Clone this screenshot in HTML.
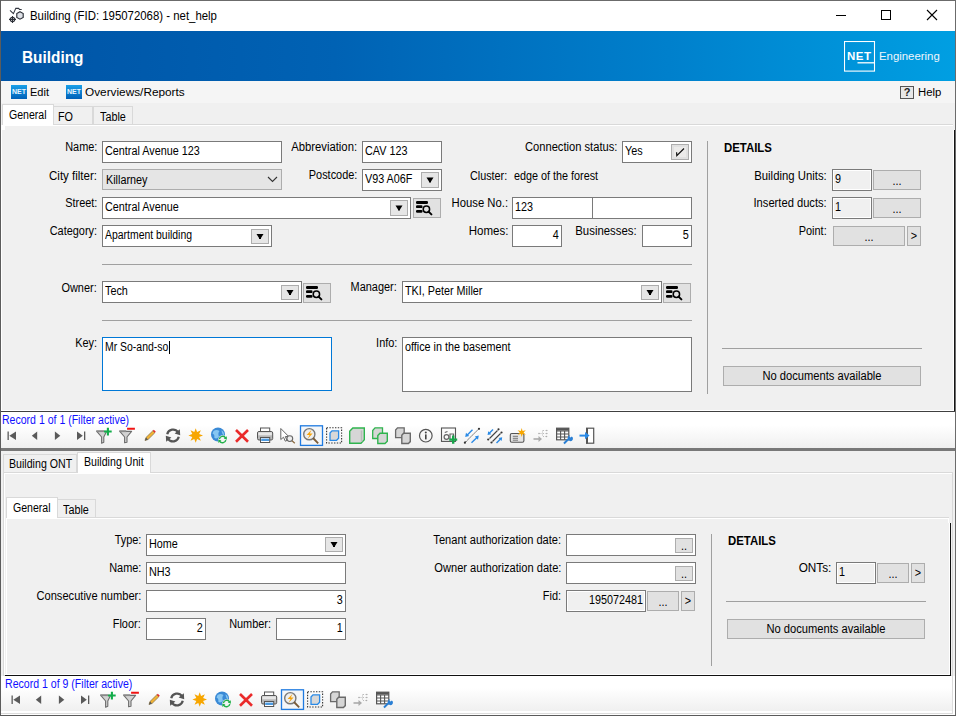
<!DOCTYPE html>
<html><head><meta charset="utf-8"><style>
html,body{margin:0;padding:0;}
body{width:956px;height:716px;overflow:hidden;position:relative;background:#f0f0f0;font-family:"Liberation Sans", sans-serif;}
.a{position:absolute;}
.t{position:absolute;white-space:nowrap;color:#000;}
</style></head><body>
<div class="a" style="left:0px;top:0px;width:956px;height:31px;background:#fff;"></div>
<svg class="a" style="left:0px;top:0px" width="30" height="30"><path d="M10,10.3 L13.4,13.6 L15.8,8.4 H18.6 L19.5,9.4 H21.7" fill="none" stroke="#333740" stroke-width="1.05"/><path d="M20,11.7 L23.2,13.5 V17.4 L20,19.2 L16.8,17.4 V13.5 Z" fill="#dfe2e8" stroke="#2d3038" stroke-width="1.15"/><circle cx="12.5" cy="19.4" r="2.2" fill="#f4f5f7" stroke="#2d3038" stroke-width="1.1"/><path d="M12.5,15.9 V22.9 M9,19.4 H16" stroke="#2d3038" stroke-width="1.1"/></svg>
<div class="t" style="left:30px;transform-origin:0 0;top:9px;font-size:12px;line-height:14px;transform:scaleX(0.95);">Building (FID: 195072068) - net_help</div>
<div class="a" style="left:836px;top:15px;width:10px;height:1px;background:#000;"></div>
<div class="a" style="left:881px;top:10px;width:10px;height:10px;border:1px solid #000;box-sizing:border-box;"></div>
<svg class="a" style="left:926px;top:9px" width="12" height="12"><path d="M1,1 L11,11 M11,1 L1,11" stroke="#000" stroke-width="1.1"/></svg>
<div class="a" style="left:1px;top:31px;width:954px;height:50px;background:linear-gradient(90deg,#0054a6 0%,#0062b4 35%,#0080cc 70%,#009fe2 100%);"></div>
<div class="t" style="left:22px;transform-origin:0 0;top:49px;font-size:16px;line-height:18px;transform:scaleX(0.96);font-weight:bold;color:#fff;">Building</div>
<svg class="a" style="left:844px;top:41px" width="32" height="31"><rect x="0.5" y="0.5" width="30" height="29.6" fill="none" stroke="#fff" stroke-width="1.1"/><path d="M13.5,21.8 H31" stroke="#fff" stroke-width="1.3"/></svg>
<div class="t" style="left:847px;transform-origin:0 0;top:50px;font-size:11.5px;line-height:13.5px;font-weight:bold;color:#fff;letter-spacing:0.5px;">NET</div>
<div class="t" style="left:879px;transform-origin:0 0;top:50px;font-size:11.5px;line-height:13.5px;transform:scaleX(0.99);color:#eef6fc;">Engineering</div>
<div class="a" style="left:1px;top:81px;width:954px;height:22px;background:#f5f5f5;"></div>
<div class="a" style="left:11px;top:85px;width:16px;height:14px;background:linear-gradient(180deg,#1aa0e8,#0060b8);"></div>
<div class="t" style="left:11px;top:88px;width:16px;text-align:center;font-size:7px;line-height:8px;font-weight:bold;color:#e8f4ff;">NET</div>
<div class="t" style="left:30px;transform-origin:0 0;top:85px;font-size:11.7px;line-height:13.7px;transform:scaleX(0.94);">Edit</div>
<div class="a" style="left:66px;top:85px;width:16px;height:14px;background:linear-gradient(180deg,#1aa0e8,#0060b8);"></div>
<div class="t" style="left:66px;top:88px;width:16px;text-align:center;font-size:7px;line-height:8px;font-weight:bold;color:#e8f4ff;">NET</div>
<div class="t" style="left:85px;transform-origin:0 0;top:85px;font-size:11.7px;line-height:13.7px;transform:scaleX(1.01);">Overviews/Reports</div>
<div class="a" style="left:900px;top:86px;width:14px;height:13px;box-sizing:border-box;border:1px solid #555;background:#e8e8e8;"></div>
<div class="t" style="left:900px;top:85px;width:14px;text-align:center;font-size:11px;line-height:14px;font-weight:bold;color:#222;">?</div>
<div class="t" style="left:918px;transform-origin:0 0;top:85px;font-size:11.7px;line-height:13.7px;transform:scaleX(0.97);">Help</div>
<div class="a" style="left:1px;top:103px;width:954px;height:22px;background:#f0f0f0;"></div>
<div class="a" style="left:53px;top:124px;width:900px;height:1px;background:#d9d9d9;"></div>
<div class="a" style="left:53px;top:106px;width:40px;height:19px;background:#f0f0f0;border:1px solid #d9d9d9;box-sizing:border-box;"></div>
<div class="a" style="left:93px;top:106px;width:40px;height:19px;background:#f0f0f0;border:1px solid #d9d9d9;box-sizing:border-box;"></div>
<div class="a" style="left:2px;top:104px;width:52px;height:21px;background:#fff;border:1px solid #d9d9d9;box-sizing:border-box;border-bottom:none;"></div>
<div class="t" style="left:9px;transform-origin:0 0;top:108px;font-size:12px;line-height:14px;transform:scaleX(0.88);">General</div>
<div class="t" style="left:58px;transform-origin:0 0;top:110px;font-size:12px;line-height:14px;transform:scaleX(0.9);">FO</div>
<div class="t" style="left:100px;transform-origin:0 0;top:110px;font-size:12px;line-height:14px;transform:scaleX(0.9);">Table</div>
<div class="a" style="left:1px;top:125px;width:954px;height:287px;background:#f0f0f0;"></div>
<div class="a" style="left:1px;top:125px;width:4px;height:5px;background:#fff;"></div>
<div class="a" style="left:5px;top:125px;width:948px;height:1px;background:#fff;"></div>
<div class="a" style="left:1px;top:130px;width:1px;height:282px;background:#fff;"></div>
<div class="a" style="left:953px;top:130px;width:1px;height:281px;background:#fff;"></div>
<div class="a" style="left:954px;top:130px;width:1px;height:282px;background:#141414;"></div>
<div class="a" style="left:1px;top:410px;width:953px;height:1px;background:#fff;"></div>
<div class="a" style="left:1px;top:411px;width:954px;height:1px;background:#404040;"></div>
<div class="a" style="left:1px;top:412px;width:954px;height:1px;background:#9a9a9a;"></div>
<div class="t" style="right:859px;transform-origin:100% 0;top:140px;font-size:12px;line-height:14px;transform:scaleX(0.91);">Name:</div>
<div class="a" style="left:102px;top:141px;width:180px;height:22px;background:#fff;border:1px solid #7a7a7a;box-sizing:border-box;"></div>
<div class="t" style="left:105px;transform-origin:0 0;top:144px;font-size:12px;line-height:14px;transform:scaleX(0.9);">Central Avenue 123</div>
<div class="t" style="right:599px;transform-origin:100% 0;top:140px;font-size:12px;line-height:14px;transform:scaleX(0.94);">Abbreviation:</div>
<div class="a" style="left:362px;top:141px;width:80px;height:22px;background:#fff;border:1px solid #7a7a7a;box-sizing:border-box;"></div>
<div class="t" style="left:365px;transform-origin:0 0;top:144px;font-size:12px;line-height:14px;transform:scaleX(0.9);">CAV 123</div>
<div class="t" style="right:339px;transform-origin:100% 0;top:140px;font-size:12px;line-height:14px;transform:scaleX(0.93);">Connection status:</div>
<div class="a" style="left:622px;top:141px;width:70px;height:22px;background:#fff;border:1px solid #7a7a7a;box-sizing:border-box;"></div>
<div class="t" style="left:625px;transform-origin:0 0;top:144px;font-size:12px;line-height:14px;transform:scaleX(0.9);">Yes</div>
<div class="a" style="left:671px;top:144px;width:18px;height:16px;background:#e1e1e1;border:1px solid #adadad;box-sizing:border-box;"></div>
<div class="a" style="left:674px;top:147px;width:12px;height:10px;background:#ecebea;"></div>
<svg class="a" style="left:671px;top:144px" width="18" height="16"><path d="M5.6,8.2 L5.8,11.6 L13,4.5" fill="none" stroke="#111" stroke-width="1.2"/></svg>
<div class="t" style="right:859px;transform-origin:100% 0;top:169px;font-size:12px;line-height:14px;transform:scaleX(0.96);">City filter:</div>
<div class="a" style="left:102px;top:169px;width:180px;height:21px;background:#e5e5e5;border:1px solid #adadad;box-sizing:border-box;"></div>
<div class="t" style="left:106px;transform-origin:0 0;top:173px;font-size:12px;line-height:14px;transform:scaleX(0.9);">Killarney</div>
<svg class="a" style="left:267px;top:174px" width="12" height="10"><path d="M1,3 L5.5,7.5 L10,3" fill="none" stroke="#333" stroke-width="1.1"/></svg>
<div class="t" style="right:599px;transform-origin:100% 0;top:168px;font-size:12px;line-height:14px;transform:scaleX(0.91);">Postcode:</div>
<div class="a" style="left:362px;top:169px;width:80px;height:22px;background:#fff;border:1px solid #7a7a7a;box-sizing:border-box;"></div>
<div class="t" style="left:365px;transform-origin:0 0;top:172px;font-size:12px;line-height:14px;transform:scaleX(0.9);">V93 A06F</div>
<div class="a" style="left:421px;top:172px;width:18px;height:16px;background:#e6e6e6;border:1px solid #adadad;box-sizing:border-box;"></div>
<svg class="a" style="left:421px;top:172px" width="18" height="16"><path d="M5.5,5.5 h7 l-2.5,4 v1 h-2 v-1 z" fill="#000"/></svg>
<div class="t" style="left:470px;transform-origin:0 0;top:169px;font-size:12px;line-height:14px;transform:scaleX(0.9);">Cluster:</div>
<div class="t" style="left:514px;transform-origin:0 0;top:169px;font-size:12px;line-height:14px;transform:scaleX(0.9);">edge of the forest</div>
<div class="t" style="right:859px;transform-origin:100% 0;top:196px;font-size:12px;line-height:14px;transform:scaleX(0.91);">Street:</div>
<div class="a" style="left:102px;top:197px;width:309px;height:22px;background:#fff;border:1px solid #7a7a7a;box-sizing:border-box;"></div>
<div class="t" style="left:105px;transform-origin:0 0;top:200px;font-size:12px;line-height:14px;transform:scaleX(0.9);">Central Avenue</div>
<div class="a" style="left:390px;top:200px;width:18px;height:16px;background:#e6e6e6;border:1px solid #adadad;box-sizing:border-box;"></div>
<svg class="a" style="left:390px;top:200px" width="18" height="16"><path d="M5.5,5.5 h7 l-2.5,4 v1 h-2 v-1 z" fill="#000"/></svg>
<div class="a" style="left:413px;top:198px;width:28px;height:20px;background:#e1e1e1;border:1px solid #adadad;box-sizing:border-box;"></div>
<svg class="a" style="left:413px;top:198px" width="28" height="20"><rect x="3" y="3" width="12" height="2.9" rx="1.2" fill="#000"/><rect x="3" y="7.2" width="6.5" height="2.9" rx="1.2" fill="#000"/><rect x="3" y="11.9" width="6.5" height="2.9" rx="1.2" fill="#000"/><circle cx="13.4" cy="11.2" r="3.2" fill="none" stroke="#000" stroke-width="1.5"/><path d="M15.6,13.6 L18.4,16.4" stroke="#000" stroke-width="2" stroke-linecap="round"/></svg>
<div class="t" style="right:448px;transform-origin:100% 0;top:196px;font-size:12px;line-height:14px;transform:scaleX(0.94);">House No.:</div>
<div class="a" style="left:512px;top:197px;width:81px;height:22px;background:#fff;border:1px solid #7a7a7a;box-sizing:border-box;"></div>
<div class="t" style="left:515px;transform-origin:0 0;top:200px;font-size:12px;line-height:14px;transform:scaleX(0.9);">123</div>
<div class="a" style="left:592px;top:197px;width:100px;height:22px;background:#fff;border:1px solid #7a7a7a;box-sizing:border-box;"></div>
<div class="t" style="right:859px;transform-origin:100% 0;top:224px;font-size:12px;line-height:14px;transform:scaleX(0.91);">Category:</div>
<div class="a" style="left:102px;top:225px;width:170px;height:22px;background:#fff;border:1px solid #7a7a7a;box-sizing:border-box;"></div>
<div class="t" style="left:105px;transform-origin:0 0;top:228px;font-size:12px;line-height:14px;transform:scaleX(0.87);">Apartment building</div>
<div class="a" style="left:251px;top:229px;width:18px;height:15px;background:#e6e6e6;border:1px solid #adadad;box-sizing:border-box;"></div>
<svg class="a" style="left:251px;top:229px" width="18" height="15"><path d="M5.5,5.0 h7 l-2.5,4 v1 h-2 v-1 z" fill="#000"/></svg>
<div class="t" style="right:448px;transform-origin:100% 0;top:224px;font-size:12px;line-height:14px;transform:scaleX(0.96);">Homes:</div>
<div class="a" style="left:512px;top:225px;width:50px;height:22px;background:#fff;border:1px solid #7a7a7a;box-sizing:border-box;"></div>
<div class="t" style="right:397px;transform-origin:100% 0;top:228px;font-size:12px;line-height:14px;transform:scaleX(0.9);">4</div>
<div class="t" style="right:319px;transform-origin:100% 0;top:224px;font-size:12px;line-height:14px;transform:scaleX(0.95);">Businesses:</div>
<div class="a" style="left:642px;top:225px;width:50px;height:22px;background:#fff;border:1px solid #7a7a7a;box-sizing:border-box;"></div>
<div class="t" style="right:267px;transform-origin:100% 0;top:228px;font-size:12px;line-height:14px;transform:scaleX(0.9);">5</div>
<div class="a" style="left:102px;top:264px;width:590px;height:1px;background:#a0a0a0;"></div>
<div class="t" style="right:859px;transform-origin:100% 0;top:281px;font-size:12px;line-height:14px;transform:scaleX(0.91);">Owner:</div>
<div class="a" style="left:102px;top:281px;width:200px;height:22px;background:#fff;border:1px solid #7a7a7a;box-sizing:border-box;"></div>
<div class="t" style="left:105px;transform-origin:0 0;top:284px;font-size:12px;line-height:14px;transform:scaleX(0.9);">Tech</div>
<div class="a" style="left:281px;top:285px;width:18px;height:15px;background:#e6e6e6;border:1px solid #adadad;box-sizing:border-box;"></div>
<svg class="a" style="left:281px;top:285px" width="18" height="15"><path d="M5.5,5.0 h7 l-2.5,4 v1 h-2 v-1 z" fill="#000"/></svg>
<div class="a" style="left:303px;top:283px;width:28px;height:20px;background:#e1e1e1;border:1px solid #adadad;box-sizing:border-box;"></div>
<svg class="a" style="left:303px;top:283px" width="28" height="20"><rect x="3" y="3" width="12" height="2.9" rx="1.2" fill="#000"/><rect x="3" y="7.2" width="6.5" height="2.9" rx="1.2" fill="#000"/><rect x="3" y="11.9" width="6.5" height="2.9" rx="1.2" fill="#000"/><circle cx="13.4" cy="11.2" r="3.2" fill="none" stroke="#000" stroke-width="1.5"/><path d="M15.6,13.6 L18.4,16.4" stroke="#000" stroke-width="2" stroke-linecap="round"/></svg>
<div class="t" style="right:559px;transform-origin:100% 0;top:280px;font-size:12px;line-height:14px;transform:scaleX(0.91);">Manager:</div>
<div class="a" style="left:402px;top:281px;width:260px;height:22px;background:#fff;border:1px solid #7a7a7a;box-sizing:border-box;"></div>
<div class="t" style="left:405px;transform-origin:0 0;top:284px;font-size:12px;line-height:14px;transform:scaleX(0.9);">TKI, Peter Miller</div>
<div class="a" style="left:641px;top:285px;width:18px;height:15px;background:#e6e6e6;border:1px solid #adadad;box-sizing:border-box;"></div>
<svg class="a" style="left:641px;top:285px" width="18" height="15"><path d="M5.5,5.0 h7 l-2.5,4 v1 h-2 v-1 z" fill="#000"/></svg>
<div class="a" style="left:663px;top:283px;width:28px;height:20px;background:#e1e1e1;border:1px solid #adadad;box-sizing:border-box;"></div>
<svg class="a" style="left:663px;top:283px" width="28" height="20"><rect x="3" y="3" width="12" height="2.9" rx="1.2" fill="#000"/><rect x="3" y="7.2" width="6.5" height="2.9" rx="1.2" fill="#000"/><rect x="3" y="11.9" width="6.5" height="2.9" rx="1.2" fill="#000"/><circle cx="13.4" cy="11.2" r="3.2" fill="none" stroke="#000" stroke-width="1.5"/><path d="M15.6,13.6 L18.4,16.4" stroke="#000" stroke-width="2" stroke-linecap="round"/></svg>
<div class="a" style="left:102px;top:320px;width:590px;height:1px;background:#a0a0a0;"></div>
<div class="t" style="right:859px;transform-origin:100% 0;top:336px;font-size:12px;line-height:14px;transform:scaleX(0.91);">Key:</div>
<div class="a" style="left:102px;top:337px;width:230px;height:54px;background:#fff;border:1px solid #0078d7;box-sizing:border-box;"></div>
<div class="t" style="left:105px;transform-origin:0 0;top:340px;font-size:12px;line-height:14px;transform:scaleX(0.87);">Mr So-and-so</div>
<div class="a" style="left:169px;top:341px;width:1px;height:13px;background:#000;"></div>
<div class="t" style="right:559px;transform-origin:100% 0;top:336px;font-size:12px;line-height:14px;transform:scaleX(0.91);">Info:</div>
<div class="a" style="left:402px;top:337px;width:290px;height:55px;background:#fff;border:1px solid #7a7a7a;box-sizing:border-box;"></div>
<div class="t" style="left:405px;transform-origin:0 0;top:340px;font-size:12px;line-height:14px;transform:scaleX(0.9);">office in the basement</div>
<div class="a" style="left:707px;top:141px;width:1px;height:253px;background:#a0a0a0;"></div>
<div class="t" style="left:724px;transform-origin:0 0;top:141px;font-size:12px;line-height:14px;transform:scaleX(0.95);font-weight:bold;">DETAILS</div>
<div class="t" style="right:129px;transform-origin:100% 0;top:169px;font-size:12px;line-height:14px;transform:scaleX(0.945);">Building Units:</div>
<div class="a" style="left:832px;top:169px;width:40px;height:22px;background:#fff;border:1px solid #7a7a7a;box-sizing:border-box;"></div>
<div class="a" style="left:833px;top:170px;width:38px;height:20px;background:#f0f0f0;border:1px solid #fff;box-sizing:border-box;"></div>
<div class="t" style="left:835px;transform-origin:0 0;top:172px;font-size:12px;line-height:14px;transform:scaleX(0.9);">9</div>
<div class="a" style="left:873px;top:170px;width:48px;height:20px;background:#e1e1e1;border:1px solid #adadad;box-sizing:border-box;"></div>
<div class="t" style="left:873px;width:48px;text-align:center;top:174px;font-size:12px;line-height:14px;transform:scaleX(0.9);transform-origin:50% 0;">...</div>
<div class="t" style="right:129px;transform-origin:100% 0;top:196px;font-size:12px;line-height:14px;transform:scaleX(0.93);">Inserted ducts:</div>
<div class="a" style="left:832px;top:197px;width:40px;height:22px;background:#fff;border:1px solid #7a7a7a;box-sizing:border-box;"></div>
<div class="a" style="left:833px;top:198px;width:38px;height:20px;background:#f0f0f0;border:1px solid #fff;box-sizing:border-box;"></div>
<div class="t" style="left:835px;transform-origin:0 0;top:200px;font-size:12px;line-height:14px;transform:scaleX(0.9);">1</div>
<div class="a" style="left:873px;top:198px;width:48px;height:20px;background:#e1e1e1;border:1px solid #adadad;box-sizing:border-box;"></div>
<div class="t" style="left:873px;width:48px;text-align:center;top:202px;font-size:12px;line-height:14px;transform:scaleX(0.9);transform-origin:50% 0;">...</div>
<div class="t" style="right:129px;transform-origin:100% 0;top:224px;font-size:12px;line-height:14px;transform:scaleX(0.91);">Point:</div>
<div class="a" style="left:833px;top:226px;width:72px;height:20px;background:#e1e1e1;border:1px solid #adadad;box-sizing:border-box;"></div>
<div class="t" style="left:833px;width:72px;text-align:center;top:230px;font-size:12px;line-height:14px;transform:scaleX(0.9);transform-origin:50% 0;">...</div>
<div class="a" style="left:907px;top:226px;width:14px;height:20px;background:#e1e1e1;border:1px solid #adadad;box-sizing:border-box;"></div>
<div class="t" style="left:907px;width:14px;text-align:center;top:229px;font-size:12px;line-height:14px;transform:scaleX(0.9);transform-origin:50% 0;">&gt;</div>
<div class="a" style="left:722px;top:348px;width:200px;height:1px;background:#a0a0a0;"></div>
<div class="a" style="left:723px;top:366px;width:198px;height:20px;background:#e1e1e1;border:1px solid #adadad;box-sizing:border-box;"></div>
<div class="t" style="left:723px;width:198px;text-align:center;top:369px;font-size:12px;line-height:14px;transform:scaleX(0.93);transform-origin:50% 0;">No documents available</div>
<div class="a" style="left:1px;top:412px;width:954px;height:36px;background:linear-gradient(180deg,#fff 0%,#fff 36%,#f7f7f7 70%,#efefef 100%);"></div>
<div class="t" style="left:2px;transform-origin:0 0;top:413px;font-size:12px;line-height:14px;transform:scaleX(0.878);color:#1010ff;">Record 1 of 1 (Filter active)</div>
<svg class="a" style="left:0px;top:0px;overflow:visible" width="1" height="1"><g transform="translate(4,428)"><rect x="3.5" y="3.5" width="1.3" height="8.5" fill="#5a5a5a"/><path d="M5.3,7.75 L12,3.5 V12 Z" fill="#5a5a5a"/></g><g transform="translate(27,428)"><path d="M4.8,7.75 L10.2,3.5 V12 Z" fill="#5a5a5a"/></g><g transform="translate(50,428)"><path d="M4.9,3.5 L10.3,7.75 L4.9,12 Z" fill="#5a5a5a"/></g><g transform="translate(73,428)"><path d="M4,3.5 L9.8,7.75 L4,12 Z" fill="#5a5a5a"/><rect x="11" y="3.5" width="1.3" height="8.5" fill="#5a5a5a"/></g><g transform="translate(96,428)"><path d="M0.8,3.4 H10.5 L7.8,9 V14.2 L5.6,15.2 V9 Z" fill="#d2d2d2" stroke="#6e6e6e" stroke-width="1.1" stroke-linejoin="round"/><rect x="0.2" y="2.3" width="8" height="1.8" fill="#8a8a8a"/><path d="M8.1,3.5 H15.7 M11.9,-0.2 V7.4" stroke="#12ad4a" stroke-width="2.1"/></g><g transform="translate(119,428)"><path d="M0.8,3.4 H12.6 L8,9 V14.2 L5.6,14.8 V9 Z" fill="#d2d2d2" stroke="#6e6e6e" stroke-width="1.1" stroke-linejoin="round"/><rect x="0.2" y="2.3" width="7" height="1.8" fill="#8a8a8a"/><path d="M8.1,0.75 H15.9" stroke="#f01414" stroke-width="2"/></g><g transform="translate(142,428)"><path d="M3,12.5 L4,9.5 L10.8,2.8 L12.8,4.8 L6,11.5 Z" fill="#f2b233" stroke="#8a7a50" stroke-width="0.8"/><path d="M10.8,2.8 L11.8,1.8 L13.8,3.8 L12.8,4.8 Z" fill="#e82828"/><path d="M3,12.5 L4,9.5 L6,11.5 Z" fill="#555"/></g><g transform="translate(165,428)"><path d="M2.2,6.2 A6,6 0 0 1 13,4.2" fill="none" stroke="#555" stroke-width="2.2"/><path d="M14.8,1.2 L15.2,7.2 L9.6,5.6 Z" fill="#555"/><path d="M13.8,8.8 A6,6 0 0 1 3,10.8" fill="none" stroke="#555" stroke-width="2.2"/><path d="M1.2,13.8 L0.8,7.8 L6.4,9.4 Z" fill="#555"/></g><g transform="translate(188,428)"><path d="M7.7,0.3 L9.1,4.1 L12.9,2.3 L11.1,6.1 L15,7.5 L11.1,8.9 L12.9,12.7 L9.1,10.9 L7.7,14.8 L6.3,10.9 L2.5,12.7 L4.3,8.9 L0.4,7.5 L4.3,6.1 L2.5,2.3 L6.3,4.1 Z" fill="#f7a600"/></g><g transform="translate(211,428)"><circle cx="7" cy="6.5" r="7" fill="#3a8ad6"/><path d="M2.5,3 Q5.5,1 8.5,3 Q6.5,5.5 8,8.5 Q5.5,12 3.2,9.5 Q4,6.5 1.5,5.5 Z" fill="#86c6f2"/><path d="M10.5,2.2 Q13.5,4 13,7.5 Q11,6.5 10.5,2.2 Z" fill="#86c6f2"/><circle cx="11.6" cy="11.6" r="4.4" fill="#f4f4f4"/><path d="M8.4,11 A3.3,3.3 0 0 1 14.6,10.2 M14.8,12.2 A3.3,3.3 0 0 1 8.6,13" fill="none" stroke="#22b04a" stroke-width="1.5"/><path d="M15.8,8.2 L15.9,11.8 L12.8,10.6 Z M7.4,15 L7.3,11.4 L10.4,12.6 Z" fill="#22b04a"/></g><g transform="translate(234,428)"><path d="M2,2 L14,13.8 M14,2 L2,13.8" stroke="#ea2a2a" stroke-width="2.6"/></g><g transform="translate(257,428)"><rect x="3.5" y="0" width="9.2" height="4.5" fill="#fff" stroke="#555" stroke-width="1"/><rect x="0.5" y="3.5" width="15.2" height="8.5" rx="1.5" fill="#b8b8b8" stroke="#555" stroke-width="1"/><rect x="1.3" y="4.3" width="13.6" height="3" fill="#e6e6e6"/><rect x="3.5" y="9.5" width="9.2" height="5" fill="#fff" stroke="#555" stroke-width="1"/><rect x="4.2" y="10.6" width="7.8" height="2.4" fill="#4c9ae0"/></g><g transform="translate(280,428)"><path d="M0.8,0.5 L0.8,11.5 L3.5,9.2 L5.3,13.2 L7,12.4 L5.3,8.6 L8.6,8.4 Z" fill="#fff" stroke="#666" stroke-width="1"/><circle cx="9.8" cy="10.6" r="2.9" fill="#eee" stroke="#666" stroke-width="1.1"/><path d="M12,12.8 L14.8,15.2" stroke="#8a6a40" stroke-width="1.3"/></g><g transform="translate(303,428)"><rect x="-2.5" y="-2.2" width="22" height="19.6" fill="#f4f6f8" stroke="#1f7ae0" stroke-width="1.3"/><circle cx="6.3" cy="6.2" r="5.6" fill="#eeeeee" stroke="#777" stroke-width="1.4"/><path d="M8.6,1.8 L3.6,7 L6.6,7 L4.4,11 L9.6,5.6 L6.8,5.6 Z" fill="#f5a30a"/><path d="M10,10 L15.2,15.3" stroke="#7a5c3a" stroke-width="1.8"/></g><g transform="translate(326,428)"><rect x="0.6" y="-0.2" width="15" height="15.2" fill="none" stroke="#333" stroke-width="1.1" stroke-dasharray="1.4,1.4"/><path d="M4,5 L6,2.8 H12.6 V10.3 L10.6,12.3 H4 Z" fill="#d8d8d8" stroke="#2a8ae6" stroke-width="1.3"/></g><g transform="translate(349,428)"><path d="M0.7,3.3 L3.8,0 H15.3 V11.8 L12,15.2 H0.7 Z" fill="#d6d6d6" stroke="#2fb44e" stroke-width="1.4"/><path d="M12.5,2.5 V14" stroke="#bbb" stroke-width="1.5"/></g><g transform="translate(372,428)"><path d="M0.7,2.5 L3,-0.2 H10.5 V8 L8,10.5 H0.7 Z" fill="#d6d6d6" stroke="#2fb44e" stroke-width="1.3"/><path d="M5.8,7.5 L8,5.2 H15.3 V13.3 L13,15.5 H5.8 Z" fill="#d6d6d6" stroke="#2fb44e" stroke-width="1.4"/></g><g transform="translate(395,428)"><path d="M0.6,2 L2.5,-0.2 H9.2 V7.5 L7.5,9.6 H0.6 Z" fill="#d6d6d6" stroke="#6a6a6a" stroke-width="1.3"/><path d="M6.8,7.3 L8.6,5.3 H15.3 V13.6 L13.4,15.5 H6.8 Z" fill="#d6d6d6" stroke="#6a6a6a" stroke-width="1.4"/></g><g transform="translate(418,428)"><circle cx="7.8" cy="7.7" r="6.3" fill="none" stroke="#555" stroke-width="1.2"/><circle cx="7.8" cy="4.6" r="1" fill="#444"/><rect x="7" y="6.4" width="1.6" height="5" fill="#444"/></g><g transform="translate(441,428)"><rect x="0.5" y="0" width="14" height="13.4" fill="none" stroke="#555" stroke-width="1.1"/><circle cx="5.5" cy="9" r="2.4" fill="none" stroke="#666" stroke-width="1.2"/><path d="M3.8,4.5 L6.5,3.5 M9,11 V6 H12.5 V10" fill="none" stroke="#666" stroke-width="1.2"/><path d="M8.2,11.6 H16.2 M12.2,7.6 V15.8" stroke="#16a64a" stroke-width="2.4"/></g><g transform="translate(464,428)"><path d="M1.5,14 L14.5,1.2" stroke="#333" stroke-width="1" stroke-dasharray="1.6,1.2"/><circle cx="0.9" cy="14.7" r="1.1" fill="#333"/><circle cx="15" cy="0.8" r="1.1" fill="#333"/><path d="M8.5,1.8 L2.8,7.5" stroke="#2a8ae6" stroke-width="1.4"/><path d="M1.2,9 L2,4.8 L5.2,8 Z" fill="#2a8ae6"/><path d="M7.5,14.8 L13.2,9.2" stroke="#2a8ae6" stroke-width="1.4"/><path d="M14.8,7.5 L14,11.8 L10.8,8.6 Z" fill="#2a8ae6"/></g><g transform="translate(487,428)"><path d="M2.5,10.5 L10.5,2.5 M5.5,13.5 L13.5,5.5" stroke="#444" stroke-width="1.1"/><circle cx="1.2" cy="11.5" r="1.1" fill="#333"/><circle cx="11.5" cy="1.3" r="1.1" fill="#333"/><circle cx="4.5" cy="14.5" r="1.1" fill="#333"/><circle cx="14.5" cy="4.5" r="1.1" fill="#333"/><path d="M6,1.5 L2,5.5" stroke="#2a8ae6" stroke-width="1.4"/><path d="M0.6,7 L1.2,3.2 L4.3,6.2 Z" fill="#2a8ae6"/><path d="M9.5,15 L13.5,11" stroke="#2a8ae6" stroke-width="1.4"/><path d="M15.2,9.3 L14.6,13.1 L11.5,10 Z" fill="#2a8ae6"/></g><g transform="translate(510,428)"><rect x="0.3" y="5.5" width="13.6" height="8.8" rx="1.5" fill="#e4e4e4" stroke="#555" stroke-width="1.1"/><path d="M2.8,8.3 H8 M2.8,10.3 H8 M2.8,12.2 H8" stroke="#777" stroke-width="1"/><path d="M11.7,0 L12.6,3 L15.8,2.3 L13.6,4.5 L15.8,6.7 L12.6,6 L11.7,9 L10.8,6 L7.6,6.7 L9.8,4.5 L7.6,2.3 L10.8,3 Z" fill="#f7a600"/></g><g transform="translate(533,428)"><path d="M0.5,11 H7" stroke="#aaa" stroke-width="1.6"/><path d="M9,11 L5.5,8 V14 Z" fill="#aaa"/><path d="M6.5,5.5 H9 M9.5,2.5 V8.5 M10,2.5 H12.5 M10,5.5 H12.5 M10,8.5 H12.5" stroke="#bbb" stroke-width="1" stroke-dasharray="1,1"/><circle cx="6" cy="5.5" r="0.8" fill="#aaa"/><circle cx="13.8" cy="2.5" r="0.8" fill="#aaa"/><circle cx="13.8" cy="5.5" r="0.8" fill="#aaa"/><circle cx="13.5" cy="8.5" r="0.8" fill="#aaa"/></g><g transform="translate(556,428)"><rect x="0.6" y="0.2" width="12.2" height="11.6" fill="#fff" stroke="#555" stroke-width="1.2"/><path d="M0.6,3 H12.8 M0.6,6 H12.8 M0.6,9 H12.8 M4.6,3 V11.8 M8.6,3 V11.8" stroke="#555" stroke-width="1.1"/><rect x="0.6" y="0.2" width="12.2" height="2.4" fill="#555"/><path d="M8,15.5 L13,10.5" stroke="#2a7fd4" stroke-width="2"/><path d="M12,10.5 A2.5,2.5 0 1 0 15.8,8.5 L14.5,9.6 L13.3,8.6 L14.2,7.2 A2.5,2.5 0 0 0 12,10.5 Z" fill="#2a7fd4"/></g><g transform="translate(579,428)"><rect x="7.6" y="0.2" width="7.1" height="15" fill="#fff" stroke="#555" stroke-width="1.2"/><rect x="7" y="0" width="2" height="15.5" fill="#555"/><path d="M0.5,7.6 H7" stroke="#2a8ae6" stroke-width="2"/><path d="M10.6,7.6 L6,4 V11.2 Z" fill="#2a8ae6"/></g></svg>
<div class="a" style="left:1px;top:448px;width:954px;height:3px;background:#787878;"></div>
<div class="a" style="left:1px;top:451px;width:954px;height:265px;background:#f0f0f0;"></div>
<div class="a" style="left:3px;top:472px;width:950px;height:204px;background:#f0f0f0;border:1px solid #d9d9d9;box-sizing:border-box;"></div>
<div class="a" style="left:4px;top:473px;width:948px;height:202px;background:#f0f0f0;border-top:1px solid #fff;border-left:1px solid #fff;box-sizing:border-box;"></div>
<div class="a" style="left:3px;top:454px;width:74px;height:19px;background:#f0f0f0;border:1px solid #d9d9d9;box-sizing:border-box;"></div>
<div class="a" style="left:77px;top:452px;width:74px;height:21px;background:#fff;border:1px solid #d9d9d9;box-sizing:border-box;border-bottom:none;"></div>
<div class="t" style="left:9px;transform-origin:0 0;top:457px;font-size:12px;line-height:14px;transform:scaleX(0.885);">Building ONT</div>
<div class="t" style="left:84px;transform-origin:0 0;top:455px;font-size:12px;line-height:14px;transform:scaleX(0.885);">Building Unit</div>
<div class="a" style="left:57px;top:517px;width:892px;height:1px;background:#d9d9d9;"></div>
<div class="a" style="left:57px;top:499px;width:39px;height:19px;background:#f0f0f0;border:1px solid #d9d9d9;box-sizing:border-box;"></div>
<div class="a" style="left:6px;top:497px;width:52px;height:21px;background:#fff;border:1px solid #d9d9d9;box-sizing:border-box;border-bottom:none;"></div>
<div class="t" style="left:13px;transform-origin:0 0;top:501px;font-size:12px;line-height:14px;transform:scaleX(0.88);">General</div>
<div class="t" style="left:63px;transform-origin:0 0;top:503px;font-size:12px;line-height:14px;transform:scaleX(0.9);">Table</div>
<div class="a" style="left:5px;top:518px;width:946px;height:158px;background:#f0f0f0;"></div>
<div class="a" style="left:6px;top:518px;width:942px;height:1px;background:#fff;"></div>
<div class="a" style="left:948px;top:518px;width:1px;height:5px;background:#fff;"></div>
<div class="a" style="left:6px;top:518px;width:1px;height:157px;background:#fff;"></div>
<div class="a" style="left:949px;top:523px;width:1px;height:152px;background:#fff;"></div>
<div class="a" style="left:950px;top:523px;width:1px;height:153px;background:#111;"></div>
<div class="a" style="left:5px;top:674px;width:945px;height:1px;background:#fff;"></div>
<div class="a" style="left:5px;top:675px;width:946px;height:1px;background:#111;"></div>
<div class="t" style="right:815px;transform-origin:100% 0;top:533px;font-size:12px;line-height:14px;transform:scaleX(0.91);">Type:</div>
<div class="a" style="left:146px;top:534px;width:200px;height:22px;background:#fff;border:1px solid #7a7a7a;box-sizing:border-box;"></div>
<div class="t" style="left:149px;transform-origin:0 0;top:537px;font-size:12px;line-height:14px;transform:scaleX(0.9);">Home</div>
<div class="a" style="left:325px;top:537px;width:18px;height:15px;background:#e6e6e6;border:1px solid #adadad;box-sizing:border-box;"></div>
<svg class="a" style="left:325px;top:537px" width="18" height="15"><path d="M5.5,5.0 h7 l-2.5,4 v1 h-2 v-1 z" fill="#000"/></svg>
<div class="t" style="right:815px;transform-origin:100% 0;top:561px;font-size:12px;line-height:14px;transform:scaleX(0.91);">Name:</div>
<div class="a" style="left:146px;top:562px;width:200px;height:22px;background:#fff;border:1px solid #7a7a7a;box-sizing:border-box;"></div>
<div class="t" style="left:149px;transform-origin:0 0;top:565px;font-size:12px;line-height:14px;transform:scaleX(0.9);">NH3</div>
<div class="t" style="right:815px;transform-origin:100% 0;top:589px;font-size:12px;line-height:14px;transform:scaleX(0.925);">Consecutive number:</div>
<div class="a" style="left:146px;top:590px;width:200px;height:22px;background:#fff;border:1px solid #7a7a7a;box-sizing:border-box;"></div>
<div class="t" style="right:613px;transform-origin:100% 0;top:593px;font-size:12px;line-height:14px;transform:scaleX(0.9);">3</div>
<div class="t" style="right:815px;transform-origin:100% 0;top:617px;font-size:12px;line-height:14px;transform:scaleX(0.91);">Floor:</div>
<div class="a" style="left:146px;top:618px;width:60px;height:22px;background:#fff;border:1px solid #7a7a7a;box-sizing:border-box;"></div>
<div class="t" style="right:753px;transform-origin:100% 0;top:621px;font-size:12px;line-height:14px;transform:scaleX(0.9);">2</div>
<div class="t" style="right:685px;transform-origin:100% 0;top:617px;font-size:12px;line-height:14px;transform:scaleX(0.91);">Number:</div>
<div class="a" style="left:276px;top:618px;width:70px;height:22px;background:#fff;border:1px solid #7a7a7a;box-sizing:border-box;"></div>
<div class="t" style="right:613px;transform-origin:100% 0;top:621px;font-size:12px;line-height:14px;transform:scaleX(0.9);">1</div>
<div class="t" style="right:395px;transform-origin:100% 0;top:533px;font-size:12px;line-height:14px;transform:scaleX(0.925);">Tenant authorization date:</div>
<div class="a" style="left:566px;top:534px;width:130px;height:22px;background:#fff;border:1px solid #7a7a7a;box-sizing:border-box;"></div>
<div class="a" style="left:675px;top:538px;width:18px;height:15px;background:#e1e1e1;border:1px solid #adadad;box-sizing:border-box;"></div>
<div class="t" style="left:675px;width:18px;text-align:center;top:539px;font-size:12px;line-height:14px;transform:scaleX(0.9);transform-origin:50% 0;">..</div>
<div class="t" style="right:395px;transform-origin:100% 0;top:561px;font-size:12px;line-height:14px;transform:scaleX(0.925);">Owner authorization date:</div>
<div class="a" style="left:566px;top:562px;width:130px;height:22px;background:#fff;border:1px solid #7a7a7a;box-sizing:border-box;"></div>
<div class="a" style="left:675px;top:566px;width:18px;height:15px;background:#e1e1e1;border:1px solid #adadad;box-sizing:border-box;"></div>
<div class="t" style="left:675px;width:18px;text-align:center;top:567px;font-size:12px;line-height:14px;transform:scaleX(0.9);transform-origin:50% 0;">..</div>
<div class="t" style="right:395px;transform-origin:100% 0;top:589px;font-size:12px;line-height:14px;transform:scaleX(0.91);">Fid:</div>
<div class="a" style="left:566px;top:590px;width:80px;height:22px;background:#f0f0f0;border:1px solid #7a7a7a;box-sizing:border-box;"></div>
<div class="a" style="left:567px;top:591px;width:78px;height:20px;background:#f0f0f0;border:1px solid #fff;box-sizing:border-box;"></div>
<div class="t" style="right:313px;transform-origin:100% 0;top:593px;font-size:12px;line-height:14px;transform:scaleX(0.9);">195072481</div>
<div class="a" style="left:647px;top:591px;width:32px;height:20px;background:#e1e1e1;border:1px solid #adadad;box-sizing:border-box;"></div>
<div class="t" style="left:647px;width:32px;text-align:center;top:595px;font-size:12px;line-height:14px;transform:scaleX(0.9);transform-origin:50% 0;">...</div>
<div class="a" style="left:681px;top:591px;width:14px;height:20px;background:#e1e1e1;border:1px solid #adadad;box-sizing:border-box;"></div>
<div class="t" style="left:681px;width:14px;text-align:center;top:594px;font-size:12px;line-height:14px;transform:scaleX(0.9);transform-origin:50% 0;">&gt;</div>
<div class="a" style="left:711px;top:534px;width:1px;height:132px;background:#a0a0a0;"></div>
<div class="t" style="left:728px;transform-origin:0 0;top:534px;font-size:12px;line-height:14px;transform:scaleX(0.95);font-weight:bold;">DETAILS</div>
<div class="t" style="right:125px;transform-origin:100% 0;top:561px;font-size:12px;line-height:14px;transform:scaleX(0.98);">ONTs:</div>
<div class="a" style="left:836px;top:562px;width:40px;height:22px;background:#fff;border:1px solid #7a7a7a;box-sizing:border-box;"></div>
<div class="a" style="left:837px;top:563px;width:38px;height:20px;background:#f0f0f0;border:1px solid #fff;box-sizing:border-box;"></div>
<div class="t" style="left:839px;transform-origin:0 0;top:565px;font-size:12px;line-height:14px;transform:scaleX(0.9);">1</div>
<div class="a" style="left:877px;top:563px;width:32px;height:20px;background:#e1e1e1;border:1px solid #adadad;box-sizing:border-box;"></div>
<div class="t" style="left:877px;width:32px;text-align:center;top:567px;font-size:12px;line-height:14px;transform:scaleX(0.9);transform-origin:50% 0;">...</div>
<div class="a" style="left:911px;top:563px;width:14px;height:20px;background:#e1e1e1;border:1px solid #adadad;box-sizing:border-box;"></div>
<div class="t" style="left:911px;width:14px;text-align:center;top:566px;font-size:12px;line-height:14px;transform:scaleX(0.9);transform-origin:50% 0;">&gt;</div>
<div class="a" style="left:726px;top:601px;width:200px;height:1px;background:#a0a0a0;"></div>
<div class="a" style="left:727px;top:619px;width:198px;height:20px;background:#e1e1e1;border:1px solid #adadad;box-sizing:border-box;"></div>
<div class="t" style="left:727px;width:198px;text-align:center;top:622px;font-size:12px;line-height:14px;transform:scaleX(0.93);transform-origin:50% 0;">No documents available</div>
<div class="a" style="left:1px;top:676px;width:954px;height:36px;background:linear-gradient(180deg,#fff 0%,#fff 33%,#f7f7f7 66%,#efefef 100%);"></div>
<div class="t" style="left:5px;transform-origin:0 0;top:677px;font-size:12px;line-height:14px;transform:scaleX(0.88);color:#1010ff;">Record 1 of 9 (Filter active)</div>
<svg class="a" style="left:0px;top:0px;overflow:visible" width="1" height="1"><g transform="translate(8,692)"><rect x="3.5" y="3.5" width="1.3" height="8.5" fill="#5a5a5a"/><path d="M5.3,7.75 L12,3.5 V12 Z" fill="#5a5a5a"/></g><g transform="translate(31,692)"><path d="M4.8,7.75 L10.2,3.5 V12 Z" fill="#5a5a5a"/></g><g transform="translate(54,692)"><path d="M4.9,3.5 L10.3,7.75 L4.9,12 Z" fill="#5a5a5a"/></g><g transform="translate(77,692)"><path d="M4,3.5 L9.8,7.75 L4,12 Z" fill="#5a5a5a"/><rect x="11" y="3.5" width="1.3" height="8.5" fill="#5a5a5a"/></g><g transform="translate(100,692)"><path d="M0.8,3.4 H10.5 L7.8,9 V14.2 L5.6,15.2 V9 Z" fill="#d2d2d2" stroke="#6e6e6e" stroke-width="1.1" stroke-linejoin="round"/><rect x="0.2" y="2.3" width="8" height="1.8" fill="#8a8a8a"/><path d="M8.1,3.5 H15.7 M11.9,-0.2 V7.4" stroke="#12ad4a" stroke-width="2.1"/></g><g transform="translate(123,692)"><path d="M0.8,3.4 H12.6 L8,9 V14.2 L5.6,14.8 V9 Z" fill="#d2d2d2" stroke="#6e6e6e" stroke-width="1.1" stroke-linejoin="round"/><rect x="0.2" y="2.3" width="7" height="1.8" fill="#8a8a8a"/><path d="M8.1,0.75 H15.9" stroke="#f01414" stroke-width="2"/></g><g transform="translate(146,692)"><path d="M3,12.5 L4,9.5 L10.8,2.8 L12.8,4.8 L6,11.5 Z" fill="#f2b233" stroke="#8a7a50" stroke-width="0.8"/><path d="M10.8,2.8 L11.8,1.8 L13.8,3.8 L12.8,4.8 Z" fill="#e82828"/><path d="M3,12.5 L4,9.5 L6,11.5 Z" fill="#555"/></g><g transform="translate(169,692)"><path d="M2.2,6.2 A6,6 0 0 1 13,4.2" fill="none" stroke="#555" stroke-width="2.2"/><path d="M14.8,1.2 L15.2,7.2 L9.6,5.6 Z" fill="#555"/><path d="M13.8,8.8 A6,6 0 0 1 3,10.8" fill="none" stroke="#555" stroke-width="2.2"/><path d="M1.2,13.8 L0.8,7.8 L6.4,9.4 Z" fill="#555"/></g><g transform="translate(192,692)"><path d="M7.7,0.3 L9.1,4.1 L12.9,2.3 L11.1,6.1 L15,7.5 L11.1,8.9 L12.9,12.7 L9.1,10.9 L7.7,14.8 L6.3,10.9 L2.5,12.7 L4.3,8.9 L0.4,7.5 L4.3,6.1 L2.5,2.3 L6.3,4.1 Z" fill="#f7a600"/></g><g transform="translate(215,692)"><circle cx="7" cy="6.5" r="7" fill="#3a8ad6"/><path d="M2.5,3 Q5.5,1 8.5,3 Q6.5,5.5 8,8.5 Q5.5,12 3.2,9.5 Q4,6.5 1.5,5.5 Z" fill="#86c6f2"/><path d="M10.5,2.2 Q13.5,4 13,7.5 Q11,6.5 10.5,2.2 Z" fill="#86c6f2"/><circle cx="11.6" cy="11.6" r="4.4" fill="#f4f4f4"/><path d="M8.4,11 A3.3,3.3 0 0 1 14.6,10.2 M14.8,12.2 A3.3,3.3 0 0 1 8.6,13" fill="none" stroke="#22b04a" stroke-width="1.5"/><path d="M15.8,8.2 L15.9,11.8 L12.8,10.6 Z M7.4,15 L7.3,11.4 L10.4,12.6 Z" fill="#22b04a"/></g><g transform="translate(238,692)"><path d="M2,2 L14,13.8 M14,2 L2,13.8" stroke="#ea2a2a" stroke-width="2.6"/></g><g transform="translate(261,692)"><rect x="3.5" y="0" width="9.2" height="4.5" fill="#fff" stroke="#555" stroke-width="1"/><rect x="0.5" y="3.5" width="15.2" height="8.5" rx="1.5" fill="#b8b8b8" stroke="#555" stroke-width="1"/><rect x="1.3" y="4.3" width="13.6" height="3" fill="#e6e6e6"/><rect x="3.5" y="9.5" width="9.2" height="5" fill="#fff" stroke="#555" stroke-width="1"/><rect x="4.2" y="10.6" width="7.8" height="2.4" fill="#4c9ae0"/></g><g transform="translate(284,692)"><rect x="-2.5" y="-2.2" width="22" height="19.6" fill="#f4f6f8" stroke="#1f7ae0" stroke-width="1.3"/><circle cx="6.3" cy="6.2" r="5.6" fill="#eeeeee" stroke="#777" stroke-width="1.4"/><path d="M8.6,1.8 L3.6,7 L6.6,7 L4.4,11 L9.6,5.6 L6.8,5.6 Z" fill="#f5a30a"/><path d="M10,10 L15.2,15.3" stroke="#7a5c3a" stroke-width="1.8"/></g><g transform="translate(307,692)"><rect x="0.6" y="-0.2" width="15" height="15.2" fill="none" stroke="#333" stroke-width="1.1" stroke-dasharray="1.4,1.4"/><path d="M4,5 L6,2.8 H12.6 V10.3 L10.6,12.3 H4 Z" fill="#d8d8d8" stroke="#2a8ae6" stroke-width="1.3"/></g><g transform="translate(330,692)"><path d="M0.6,2 L2.5,-0.2 H9.2 V7.5 L7.5,9.6 H0.6 Z" fill="#d6d6d6" stroke="#6a6a6a" stroke-width="1.3"/><path d="M6.8,7.3 L8.6,5.3 H15.3 V13.6 L13.4,15.5 H6.8 Z" fill="#d6d6d6" stroke="#6a6a6a" stroke-width="1.4"/></g><g transform="translate(353,692)"><path d="M0.5,11 H7" stroke="#aaa" stroke-width="1.6"/><path d="M9,11 L5.5,8 V14 Z" fill="#aaa"/><path d="M6.5,5.5 H9 M9.5,2.5 V8.5 M10,2.5 H12.5 M10,5.5 H12.5 M10,8.5 H12.5" stroke="#bbb" stroke-width="1" stroke-dasharray="1,1"/><circle cx="6" cy="5.5" r="0.8" fill="#aaa"/><circle cx="13.8" cy="2.5" r="0.8" fill="#aaa"/><circle cx="13.8" cy="5.5" r="0.8" fill="#aaa"/><circle cx="13.5" cy="8.5" r="0.8" fill="#aaa"/></g><g transform="translate(376,692)"><rect x="0.6" y="0.2" width="12.2" height="11.6" fill="#fff" stroke="#555" stroke-width="1.2"/><path d="M0.6,3 H12.8 M0.6,6 H12.8 M0.6,9 H12.8 M4.6,3 V11.8 M8.6,3 V11.8" stroke="#555" stroke-width="1.1"/><rect x="0.6" y="0.2" width="12.2" height="2.4" fill="#555"/><path d="M8,15.5 L13,10.5" stroke="#2a7fd4" stroke-width="2"/><path d="M12,10.5 A2.5,2.5 0 1 0 15.8,8.5 L14.5,9.6 L13.3,8.6 L14.2,7.2 A2.5,2.5 0 0 0 12,10.5 Z" fill="#2a7fd4"/></g></svg>
<div class="a" style="left:1px;top:711px;width:954px;height:4px;background:#fff;"></div>
<div class="a" style="left:1px;top:713px;width:952px;height:1px;background:#dcdcdc;"></div>
<div class="a" style="left:952px;top:676px;width:1px;height:38px;background:#dcdcdc;"></div>
<div class="a" style="left:953px;top:676px;width:2px;height:39px;background:#fff;"></div>
<div class="a" style="left:0px;top:0px;width:956px;height:1px;background:#6b6b6b;"></div>
<div class="a" style="left:0px;top:0px;width:1px;height:716px;background:#5c5c5c;"></div>
<div class="a" style="left:955px;top:0px;width:1px;height:716px;background:#6b6b6b;"></div>
<div class="a" style="left:0px;top:715px;width:956px;height:1px;background:#5a5a5a;"></div>
</body></html>
